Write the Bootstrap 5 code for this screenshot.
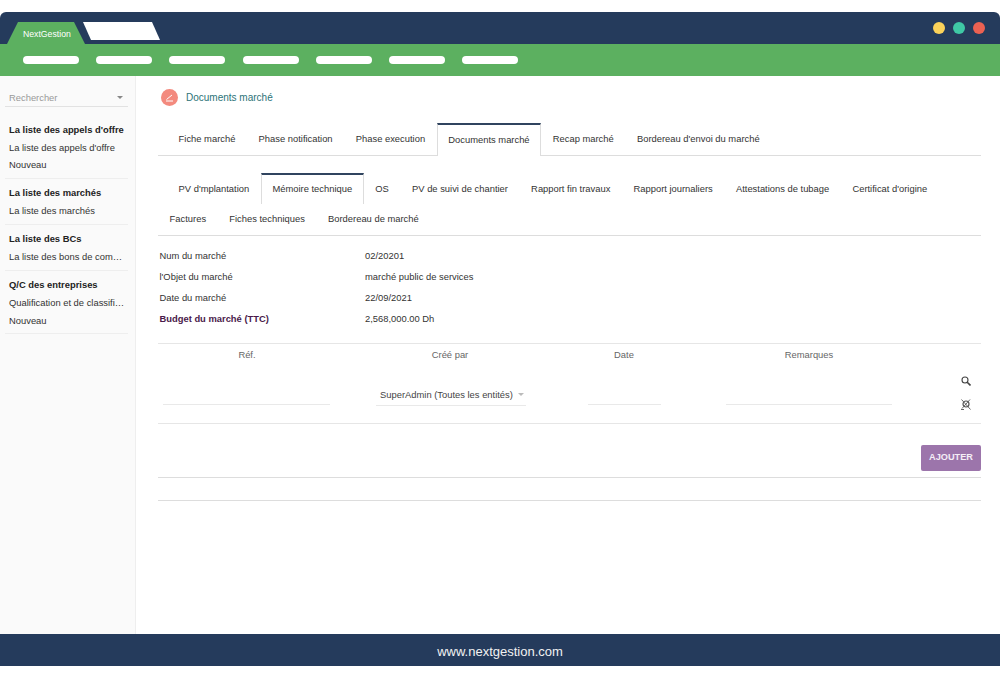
<!DOCTYPE html>
<html lang="fr">
<head>
<meta charset="utf-8">
<title>NextGestion</title>
<link href="https://cdn.jsdelivr.net/npm/bootstrap@5.3.0/dist/css/bootstrap.min.css" rel="stylesheet">
<style>
html,body{height:679px;overflow:hidden;background:#fff}
body{font-family:"Liberation Sans",Arial,sans-serif;font-size:9.4px;color:#333;padding-top:12px}
.app-shell{height:654px}
.top-bar{height:32px;background:#253b5c;border-radius:6px 6px 0 0;padding:10px 15px 0 7px}
.tab-green{width:78px;height:22px;background:#5cb060;color:#fff;font-size:8.7px;line-height:12px;clip-path:polygon(0 100%,11px 0,67px 0,100% 100%);padding:6px 0 0 16px}
.tab-white{width:77px;height:18px;background:#fff;margin-left:-2px;clip-path:polygon(0 0,69px 0,100% 100%,8px 100%)}
.dot-item{width:12px;height:12px;border-radius:50%}
.dot-yellow{background:#fbd25a}
.dot-teal{background:#3fc8a5}
.dot-red{background:#ec6152}
.menu-bar{height:32px;background:#5cb060;padding:0 0 0 23px;gap:17.2px}
.menu-pill{width:56px;height:8px;background:#fff;border-radius:4px}
.side-panel{width:136px;background:#fafafa;border-right:1px solid #eee;padding:0 7px 0 5px}
.search-box{height:31px;padding:14px 5px 0 4px;line-height:15px;border-bottom:1px solid #e2e2e2;color:#999;margin-bottom:8px}
.caret-down{width:0;height:0;border-left:3px solid transparent;border-right:3px solid transparent;border-top:3px solid #888}
.side-group{padding:4.5px 0 4px 4px;border-bottom:1px solid #eee;line-height:17.5px;color:#333;white-space:nowrap}
.side-group b{display:block;color:#222;line-height:19px}
.main-area{padding:0 19px 0 22px;min-width:0}
.crumb-row{height:44px;padding:0 0 2px 3px;gap:8px;font-size:10px;color:#2c7378}
.crumb-icon{width:17px;height:17px;border-radius:50%;background:#f38a7e}
.tab-strip{list-style:none;margin:3px 0 0;padding:0 0 0 9px;border-bottom:1px solid #ddd;height:33px}
.tab-strip li{padding:0 11.6px;height:32px;line-height:32px;color:#333;white-space:nowrap}
.tab-strip li.is-on{background:#fff;border-top:2px solid #30445f;border-left:1px solid #ddd;border-right:1px solid #ddd;height:33px;line-height:29px;padding:0 10.6px}
.tab-strip.sub-strip{height:auto;flex-wrap:wrap;margin-top:17px}
.sub-strip li{height:31px;line-height:31px}
.tab-strip.sub-strip li.is-on{height:31px;line-height:27px}
.sub-strip li.sub-row2{flex-basis:100%;height:0;padding:0}
.sub-strip li.is-tight{line-height:29px}
.sub-strip li.is-first{margin-left:-9px}
.info-grid{margin:8.5px 0 0 1.5px;width:340px;line-height:21px;color:#333}
.info-label{width:205.5px}
.info-strong{color:#4a1a4a;font-weight:700}
.data-table{border-top:1px solid #e6e6e6;border-bottom:1px solid #e6e6e6;margin-top:14px;height:81px;color:#666}
.data-head{padding-top:5px;line-height:12px;text-align:center}
.col-a{width:178px}
.col-b{width:228px}
.col-c{width:120px}
.col-d{width:250px}
.col-e{flex:1}
.line-field{height:29px;margin-top:15px;border-bottom:1px solid #e9e9e9}
.field-a{margin-left:5px;margin-right:6px}
.field-c{margin-left:24px;margin-right:23px}
.field-d{margin-left:42px;margin-right:42px}
.line-select{margin:24px 38px 0 40px;height:21px;border-bottom:1px solid #e9e9e9;color:#444;line-height:15px;padding:2px 0 0 4px;white-space:nowrap;gap:5px}
.caret-soft{margin-top:6px;border-top-color:#bbb}
.action-col{padding:32px 10px 0 0;gap:13px}
.add-btn{width:60px;height:26px;background:#9c75ab;color:#f4eef6;font-weight:700;font-size:9.2px;border:0;border-radius:2px;padding:0;margin-top:21px}
.rule-one{border-bottom:1px solid #ddd;padding-bottom:6px}
.rule-two{border-bottom:1px solid #ddd;height:23px}
.foot-bar{height:32px;background:#253b5c;color:#f2f2f2;font-size:13px;padding-top:3px}
</style>
</head>
<body>
<div class="app-shell d-flex flex-column">
  <header class="top-bar d-flex align-items-start">
    <div class="tab-green">NextGestion</div>
    <div class="tab-white"></div>
    <div class="ms-auto d-flex gap-2">
      <span class="dot-item dot-yellow"></span>
      <span class="dot-item dot-teal"></span>
      <span class="dot-item dot-red"></span>
    </div>
  </header>
  <nav class="menu-bar d-flex align-items-center">
    <span class="menu-pill"></span><span class="menu-pill"></span><span class="menu-pill"></span><span class="menu-pill"></span><span class="menu-pill"></span><span class="menu-pill"></span><span class="menu-pill"></span>
  </nav>
  <div class="d-flex flex-grow-1" style="min-height:0">
    <aside class="side-panel flex-shrink-0">
      <div class="search-box d-flex justify-content-between"><span>Rechercher</span><span class="caret-down" style="margin-top:6px"></span></div>
      <div class="side-group"><b>La liste des appels d'offre</b><div>La liste des appels d'offre</div><div>Nouveau</div></div>
      <div class="side-group"><b>La liste des marchés</b><div>La liste des marchés</div></div>
      <div class="side-group"><b>La liste des BCs</b><div>La liste des bons de com…</div></div>
      <div class="side-group"><b>Q/C des entreprises</b><div>Qualification et de classifi…</div><div>Nouveau</div></div>
    </aside>
    <main class="main-area flex-grow-1 d-flex flex-column">
      <div class="crumb-row d-flex align-items-center">
        <span class="crumb-icon d-flex align-items-center justify-content-center">
          <svg width="9" height="9" viewBox="0 0 9 9" fill="none" stroke="#fff" stroke-width="1"><path d="M1 8h7M1.5 6.5 7 2"/></svg>
        </span>
        <span>Documents marché</span>
      </div>
      <ul class="tab-strip d-flex">
        <li>Fiche marché</li><li>Phase notification</li><li>Phase execution</li><li class="is-on">Documents marché</li><li>Recap marché</li><li>Bordereau d'envoi du marché</li>
      </ul>
      <ul class="tab-strip sub-strip d-flex">
        <li>PV d'mplantation</li><li class="is-on">Mémoire technique</li><li>OS</li><li>PV de suivi de chantier</li><li>Rapport fin travaux</li><li>Rapport journaliers</li><li>Attestations de tubage</li><li>Certificat d'origine</li>
        <li class="sub-row2"></li>
        <li class="is-first is-tight">Factures</li><li class="is-tight">Fiches techniques</li><li class="is-tight">Bordereau de marché</li>
      </ul>
      <div class="info-grid">
        <div class="d-flex"><span class="info-label">Num du marché</span><span>02/20201</span></div>
        <div class="d-flex"><span class="info-label">l'Objet du marché</span><span>marché public de services</span></div>
        <div class="d-flex"><span class="info-label">Date du marché</span><span>22/09/2021</span></div>
        <div class="d-flex"><span class="info-label info-strong">Budget du marché (TTC)</span><span>2,568,000.00 Dh</span></div>
      </div>
      <div class="data-table d-flex">
        <div class="col-a"><div class="data-head">Réf.</div><div class="line-field field-a"></div></div>
        <div class="col-b"><div class="data-head">Créé par</div><div class="line-select d-flex align-items-start">SuperAdmin (Toutes les entités) <span class="caret-down caret-soft"></span></div></div>
        <div class="col-c"><div class="data-head">Date</div><div class="line-field field-c"></div></div>
        <div class="col-d"><div class="data-head">Remarques</div><div class="line-field field-d"></div></div>
        <div class="col-e d-flex flex-column align-items-end action-col">
          <svg width="10" height="10" viewBox="0 0 10 10" fill="none" stroke="#444" stroke-width="1.1"><circle cx="4" cy="4" r="3"/><path d="M6.2 6.2 9.5 9.5" stroke-width="1.6"/></svg>
          <svg width="10" height="11" viewBox="0 0 10 11" fill="none" stroke="#555" stroke-width=".9"><circle cx="5" cy="5" r="3" stroke-width="1.2"/><path d="M.5 .5 9.5 10.5M9 .5 1 9.5M0 10.5h3"/></svg>
        </div>
      </div>
      <div class="rule-one d-flex justify-content-end"><button type="button" class="add-btn">AJOUTER</button></div>
      <div class="rule-two"></div>
    </main>
  </div>
  <footer class="foot-bar d-flex align-items-center justify-content-center">www.nextgestion.com</footer>
</div>
<script src="https://cdn.jsdelivr.net/npm/bootstrap@5.3.0/dist/js/bootstrap.bundle.min.js"></script>
</body>
</html>
